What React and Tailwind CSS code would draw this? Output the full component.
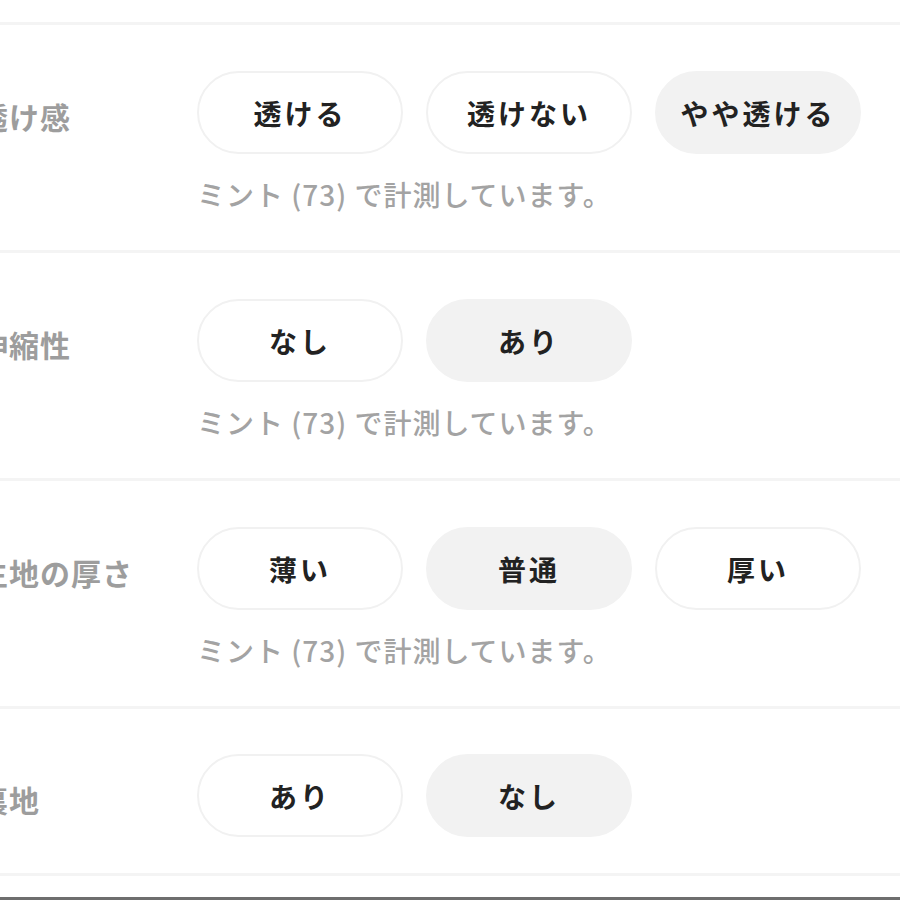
import React from "react";

const FONT = { fontFamily: '"Noto Sans CJK JP", "Noto Sans", sans-serif' };

const sections = [
  { label: "透け感", options: ["透ける", "透けない", "やや透ける"], selected: 2, caption: true },
  { label: "伸縮性", options: ["なし", "あり"], selected: 1, caption: true },
  { label: "生地の厚さ", options: ["薄い", "普通", "厚い"], selected: 1, caption: true },
  { label: "裏地", options: ["あり", "なし"], selected: 1, caption: false },
];

function Sep() {
  return <div className="h-[3px] w-full bg-[#f4f4f4]" />;
}

function Section({ s }) {
  return (
    <div className={s.caption ? "pt-[46px] pb-[40px]" : "pt-[45px] pb-[36px]"}>
      <div className="flex items-center">
        <div className="w-[219px] shrink-0 ml-[-22px] text-[30px] font-bold text-[#9d9d9d] tracking-[1px] leading-none whitespace-nowrap pt-[6px]">
          {s.label}
        </div>
        <div className="flex gap-[23px]">
          {s.options.map((o, i) => (
            <div
              key={o}
              className={
                "w-[206px] h-[83px] rounded-full flex items-center justify-center text-[28px] font-bold text-[#222] tracking-[3px] " +
                (i === s.selected
                  ? "bg-[#f2f2f2] border-2 border-[#f2f2f2]"
                  : "bg-white border-2 border-[#f1f1f1]")
              }
            >
              {o}
            </div>
          ))}
        </div>
      </div>
      {s.caption && (
        <div className="ml-[197px] mt-[24px] h-[32px] leading-[32px] text-[28px] font-medium text-[#a3a3a3] tracking-[1px] whitespace-nowrap">
          ミント (73) で計測しています。
        </div>
      )}
    </div>
  );
}

export default function App() {
  return (
    <div className="w-[900px] h-[900px] bg-white overflow-hidden flex flex-col" style={FONT}>
      <div className="h-[22px] shrink-0" />
      <Sep />
      {sections.map((s) => (
        <React.Fragment key={s.label}>
          <Section s={s} />
          <Sep />
        </React.Fragment>
      ))}
      <div className="flex-1" />
      <div className="h-[3px] bg-[#6e6e6e]" />
    </div>
  );
}
